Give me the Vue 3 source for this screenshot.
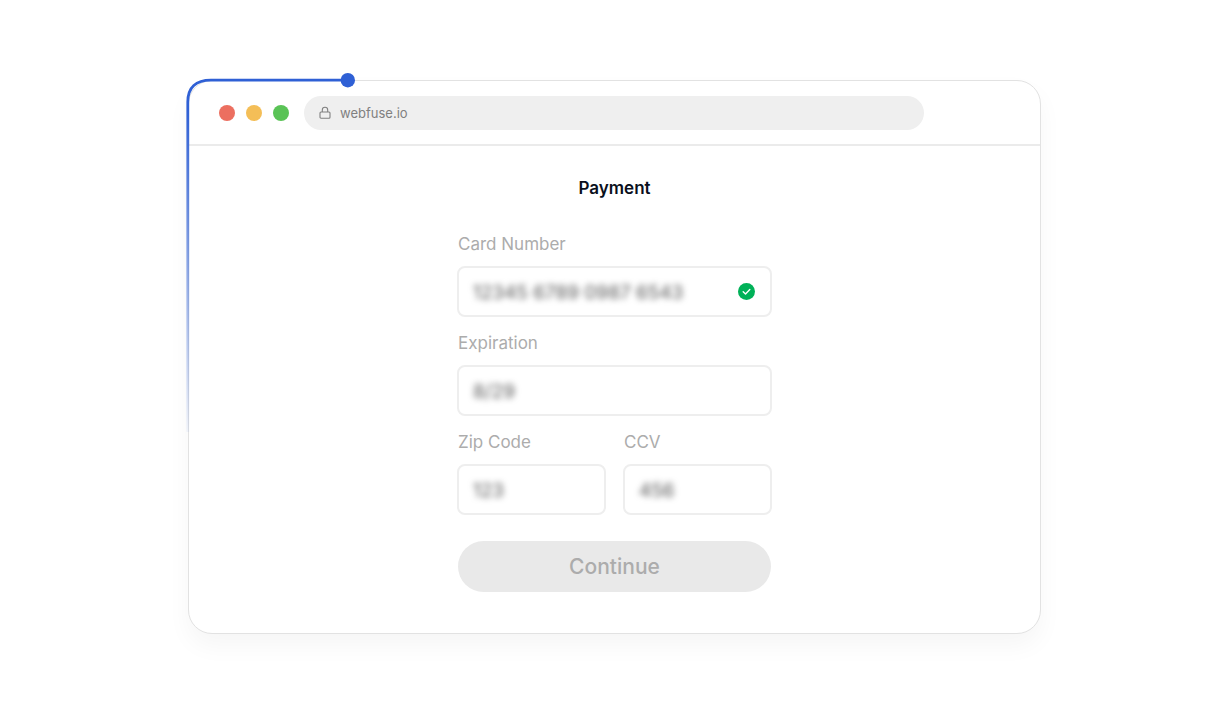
<script setup>
import { ref } from 'vue'

const url = ref('webfuse.io')
const cardNumber = ref('12345 6789 0987 6543')
const expiration = ref('8/29')
const zip = ref('123')
const ccv = ref('456')
</script>

<template>
  <main class="page">
    <section class="browser">
      <svg class="trace" width="172" height="360" viewBox="0 0 172 360" fill="none" aria-hidden="true">
        <defs>
          <linearGradient id="fade" x1="0" y1="0" x2="0" y2="380" gradientUnits="userSpaceOnUse">
            <stop offset="0.1" stop-color="#2f60d5" />
            <stop offset="1" stop-color="#2f60d5" stop-opacity="0" />
          </linearGradient>
        </defs>
        <path d="M3.8 360V30C3.8 15 12 8.2 27 8.2H164" stroke="url(#fade)" stroke-width="2.8" />
        <circle cx="163.8" cy="8.2" r="7.2" fill="#2f60d5" />
      </svg>

      <header class="bar">
        <span class="dot red"></span>
        <span class="dot amber"></span>
        <span class="dot green"></span>
        <div class="address">
          <svg width="12" height="14" viewBox="0 0 12 14" fill="none" stroke="#808080" stroke-width="1.1" stroke-linejoin="round" aria-hidden="true">
            <rect x="1" y="6" width="10" height="6.2" rx="1" />
            <path d="M3.3 6V3.9a2.7 2.7 0 0 1 5.4 0V6" />
          </svg>
          <input v-model="url" class="url" type="text" aria-label="Address" />
        </div>
      </header>

      <form class="form" @submit.prevent>
        <h1>Payment</h1>
        <div class="fields">
          <div class="field wide">
            <label for="card">Card Number</label>
            <div class="box">
              <input id="card" v-model="cardNumber" type="text" />
              <svg width="17" height="17" viewBox="0 0 17 17" fill="none" aria-hidden="true">
                <circle cx="8.5" cy="8.5" r="8.5" fill="#00b158" />
                <path d="M5.2 8.8l2.3 2.1 4.3-4.4" stroke="#fff" stroke-width="1.4" stroke-linecap="round" stroke-linejoin="round" />
              </svg>
            </div>
          </div>
          <div class="field wide">
            <label for="exp">Expiration</label>
            <div class="box"><input id="exp" v-model="expiration" type="text" /></div>
          </div>
          <div class="field">
            <label for="zip">Zip Code</label>
            <div class="box"><input id="zip" v-model="zip" type="text" /></div>
          </div>
          <div class="field">
            <label for="ccv">CCV</label>
            <div class="box"><input id="ccv" v-model="ccv" type="text" /></div>
          </div>
        </div>
        <button type="submit">Continue</button>
      </form>
    </section>
  </main>
</template>

<style>
body {
  margin: 0;
  background: #fff;
}
</style>

<style scoped>
.page {
  box-sizing: border-box;
  min-height: 100vh;
  padding: 80px 187px 80px 188px;
  font-family: Inter, "Liberation Sans", sans-serif;
}
.browser {
  position: relative;
  border: 1px solid #e2e2e2;
  border-radius: 24px;
  background: #fff;
  box-shadow: 0 12px 24px rgba(0, 0, 0, 0.04);
}
.trace {
  position: absolute;
  left: -5px;
  top: -9px;
  pointer-events: none;
}
.bar {
  display: flex;
  align-items: center;
  gap: 11px;
  height: 63px;
  padding: 0 116px 0 30px;
  border-bottom: 2px solid #ebebeb;
}
.dot {
  flex: none;
  width: 16px;
  height: 16px;
  border-radius: 50%;
}
.red { background: #ec6f60; }
.amber { background: #f4be57; }
.green { background: #5ac356; }
.address {
  display: flex;
  flex: 1;
  align-items: center;
  gap: 9px;
  height: 34px;
  margin-left: 4px;
  padding: 0 15px;
  border-radius: 17px;
  background: #efefef;
}
input {
  flex: 1;
  min-width: 0;
  padding: 0;
  border: 0;
  outline: 0;
  background: transparent;
  font-family: inherit;
}
.url {
  color: #808080;
  font-size: 13px;
}
.form {
  max-width: 315px;
  margin: 0 auto;
  padding: 30px 0 41px;
}
h1 {
  margin: 0 0 33px;
  color: #0a0f1c;
  font-size: 17px;
  font-weight: 600;
  line-height: 24px;
  text-align: center;
}
.fields {
  display: grid;
  grid-template-columns: repeat(2, minmax(0, 1fr));
  gap: 15px 17px;
}
.wide {
  grid-column: 1 / -1;
}
label {
  display: block;
  margin: 0 0 11px 1px;
  color: #acacac;
  font-size: 17px;
  line-height: 22px;
}
.box {
  display: flex;
  box-sizing: border-box;
  align-items: center;
  height: 51px;
  padding: 0 15px 0 14px;
  border: 2px solid #eee;
  border-radius: 8px;
}
.box input {
  height: 26px;
  padding-top: 2px;
  color: #555;
  font-size: 19px;
  filter: blur(3px);
}
button {
  display: block;
  width: calc(100% - 2px);
  height: 51px;
  margin: 26px auto 0;
  border: 0;
  border-radius: 26px;
  background: #e9e9e9;
  color: #acacac;
  font-family: inherit;
  font-size: 21px;
  font-weight: 500;
}
</style>
